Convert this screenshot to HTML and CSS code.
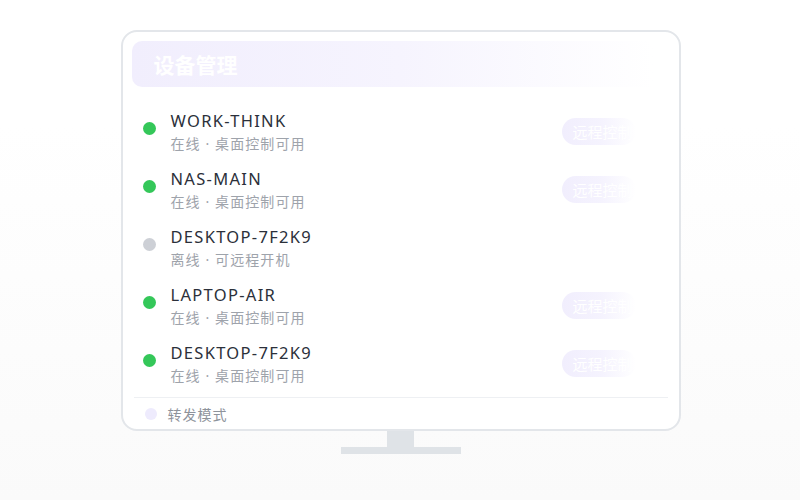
FILE: index.html
```html
<!DOCTYPE html>
<html lang="zh">
<head>
<meta charset="utf-8">
<link rel="stylesheet" href="styles.css">
</head>
<body>
<div class="scene">
  <div class="monitor">
    <div class="header">
      <span class="title">设备管理</span>
    </div>
    <div class="list">
      <div class="row">
        <span class="dot on"></span>
        <div class="info">
          <div class="name">WORK-THINK</div>
          <div class="sub">在线<span class="sep"> · </span>桌面控制可用</div>
        </div>
        <span class="btn">远程控制</span>
      </div>
      <div class="row">
        <span class="dot on"></span>
        <div class="info">
          <div class="name">NAS-MAIN</div>
          <div class="sub">在线<span class="sep"> · </span>桌面控制可用</div>
        </div>
        <span class="btn">远程控制</span>
      </div>
      <div class="row">
        <span class="dot off"></span>
        <div class="info">
          <div class="name">DESKTOP-7F2K9</div>
          <div class="sub">离线<span class="sep"> · </span>可远程开机</div>
        </div>
      </div>
      <div class="row">
        <span class="dot on"></span>
        <div class="info">
          <div class="name">LAPTOP-AIR</div>
          <div class="sub">在线<span class="sep"> · </span>桌面控制可用</div>
        </div>
        <span class="btn">远程控制</span>
      </div>
      <div class="row">
        <span class="dot on"></span>
        <div class="info">
          <div class="name">DESKTOP-7F2K9</div>
          <div class="sub">在线<span class="sep"> · </span>桌面控制可用</div>
        </div>
        <span class="btn">远程控制</span>
      </div>
    </div>
    <div class="footer">
      <span class="fdot"></span>
      <span class="ftext">转发模式</span>
    </div>
  </div>
  <div class="neck"></div>
  <div class="base"></div>
</div>
</body>
</html>
```

FILE: styles.css
```css
html, body {
  margin: 0;
  padding: 0;
}
body {
  width: 800px;
  height: 500px;
  background: linear-gradient(to bottom, #ffffff 0%, #ffffff 25%, #fafafa 100%);
  font-family: "Noto Sans", "Noto Sans CJK SC", sans-serif;
  overflow: hidden;
}
.scene {
  display: flex;
  flex-direction: column;
  align-items: center;
  padding-top: 30px;
  padding-left: 1px;
}
.monitor {
  width: 537px;
  height: 388px;
  border: 2px solid #e3e6ea;
  border-radius: 16px;
  background: #ffffff;
  padding: 9px 10px 0 9px;
  box-sizing: content-box;
  display: flex;
  flex-direction: column;
}
.header {
  height: 46px;
  border-radius: 10px;
  background: linear-gradient(to right, #f1eefd 0%, #f6f4fe 50%, #ffffff 97%);
  display: flex;
  align-items: center;
  padding-left: 22px;
}
.title {
  color: #ffffff;
  font-size: 21px;
  font-weight: 700;
  font-family: "Noto Sans CJK SC", sans-serif;
}
.list {
  display: flex;
  flex-direction: column;
  padding-top: 13px;
}
.row {
  height: 58px;
  display: flex;
  align-items: flex-start;
  padding-left: 11px;
  box-sizing: border-box;
}
.dot {
  width: 13px;
  height: 13px;
  border-radius: 50%;
  margin-top: 22px;
  flex: none;
}
.dot.on { background: #34c759; }
.dot.off { background: #cdd0d6; }
.info {
  margin-left: 15px;
  flex: 1;
  padding-top: 10px;
}
.name {
  font-size: 16.5px;
  line-height: 22px;
  color: #2b303a;
  letter-spacing: 1.3px;
}
.sub {
  font-size: 14px;
  line-height: 22px;
  color: #9ea3ab;
  letter-spacing: 1.1px;
  font-family: "Noto Sans CJK SC", sans-serif;
}
.sep {
  font-family: "Noto Sans", sans-serif;
}
.btn {
  margin-top: 18px;
  width: 74px;
  height: 27px;
  border-radius: 14px;
  background: linear-gradient(to right, #f1eefd 0%, #f5f3fe 55%, #ffffff 100%);
  color: #ffffff;
  font-size: 15px;
  line-height: 27px;
  padding-left: 11px;
  box-sizing: border-box;
  white-space: nowrap;
  overflow: hidden;
  margin-right: 33px;
  font-family: "Noto Sans CJK SC", sans-serif;
}
.footer {
  margin-top: 7px;
  border-top: 1px solid #eef0f3;
  margin-left: 2px;
  margin-right: 1px;
  flex: 1;
  display: flex;
  align-items: center;
  padding-left: 11px;
}
.fdot {
  width: 12px;
  height: 12px;
  border-radius: 50%;
  background: #eeebfd;
}
.ftext {
  margin-left: 11px;
  font-size: 14px;
  letter-spacing: 1px;
  color: #8e939b;
  font-family: "Noto Sans CJK SC", sans-serif;
}
.neck {
  width: 27px;
  height: 16px;
  background: #dfe3e7;
}
.base {
  width: 120px;
  height: 7px;
  background: #dfe3e7;
}
```
